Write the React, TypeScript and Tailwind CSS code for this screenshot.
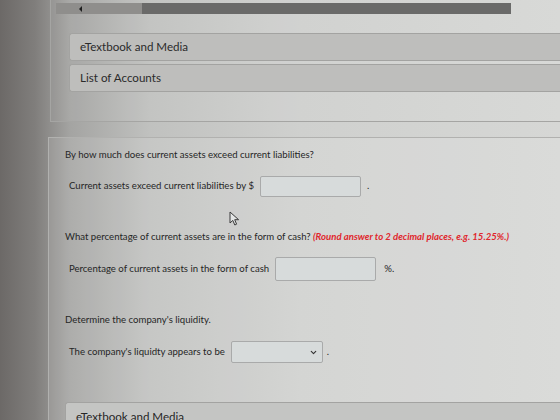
import { ChevronDown } from 'lucide-react'

function ResourceRow({ label }: { label: string }) {
  return (
    <div className="flex h-[28px] items-center rounded-l-[3px] border border-r-0 border-[#a3a3a1] bg-[#bebebc] pl-[10px] text-[11.6px] text-[#2b2b2b]">
      {label}
    </div>
  )
}

function TextBox({ width, height }: { width: string; height: string }) {
  return <div className={`rounded-[2px] border border-[#a9aaaa] bg-[#d7dbdb] ${width} ${height}`} />
}

function Pointer() {
  return (
    <svg width="11" height="15" viewBox="0 0 11 15" className="ml-[164px]">
      <path d="M1 1 L1 12 L3.8 9.4 L5.8 14 L7.6 13.2 L5.7 8.7 L9.6 8.7 Z" fill="#e4e6e6" stroke="#3a3a3a" strokeWidth="1" strokeLinejoin="round" />
    </svg>
  )
}

export default function App() {
  return (
    <div className="h-[420px] overflow-hidden bg-[linear-gradient(90deg,#6c6967_0px,#807e7c_35px,#a4a4a2_70px,#c0c1bf_150px,#cfd0ce_300px,#d6d7d5_560px)] font-['Lato','Open_Sans',sans-serif] text-[#262626]">
      {/* top panel with scrollbar and resource links */}
      <div className="ml-[50px] -mt-[6px] border-b border-l border-[#a5a5a3] bg-white/5 pb-[29px]">
        <div className="flex pt-[9px]">
          <div className="ml-[5px] flex h-[11px] w-[86px] items-center bg-[#8f8e8c] pl-[23px]">
            <div className="h-0 w-0 border-y-[3px] border-r-[3px] border-y-transparent border-r-[#1e1e1e]" />
          </div>
          <div className="h-[11px] w-[369px] bg-[#6a6a69]" />
        </div>
        <div className="ml-[18px] mt-[19px] flex flex-col gap-[3px]">
          <ResourceRow label="eTextbook and Media" />
          <ResourceRow label="List of Accounts" />
        </div>
      </div>

      {/* question panel */}
      <div className="ml-[48px] mt-[15px] h-[400px] border-l border-t border-[#b1b1af] bg-white/10 pl-[16px] text-[9.6px]">
        <p className="pt-[10px] leading-[14px]">By how much does current assets exceed current liabilities?</p>

        <div className="mt-[14px] flex items-center pl-[4px]">
          <span>Current assets exceed current liabilities by $</span>
          <div className="ml-[6px]">
            <TextBox width="w-[101px]" height="h-[21px]" />
          </div>
          <span className="ml-[6px]">.</span>
        </div>

        <div className="mt-[14px]">
          <Pointer />
        </div>

        <p className="mt-[4px] leading-[14px]">
          What percentage of current assets are in the form of cash?{' '}
          <span className="font-bold italic text-[#e0262c]">(Round answer to 2 decimal places, e.g. 15.25%.)</span>
        </p>

        <div className="mt-[13px] flex items-center pl-[4px]">
          <span>Percentage of current assets in the form of cash</span>
          <div className="ml-[6px]">
            <TextBox width="w-[101px]" height="h-[24px]" />
          </div>
          <span className="ml-[8px]">%.</span>
        </div>

        <p className="mt-[32px] leading-[14px]">Determine the company's liquidity.</p>

        <div className="mt-[14px] flex items-center pl-[4px]">
          <span>The company's liquidty appears to be</span>
          <div className="ml-[6px] flex h-[22px] w-[92px] items-center justify-end rounded-[2px] border border-[#a9aaaa] bg-[#d7dbdb] pr-[4px]">
            <ChevronDown className="h-[9px] w-[9px] text-[#333]" strokeWidth={3} />
          </div>
          <span className="ml-[4px]">.</span>
        </div>

        <div className="mt-[39px] flex h-[28px] items-start rounded-l-[3px] border border-r-0 border-[#a3a3a1] bg-[#c4c5c3] pl-[10px] pt-[5px] text-[11.6px]">
          eTextbook and Media
        </div>
      </div>
    </div>
  )
}
